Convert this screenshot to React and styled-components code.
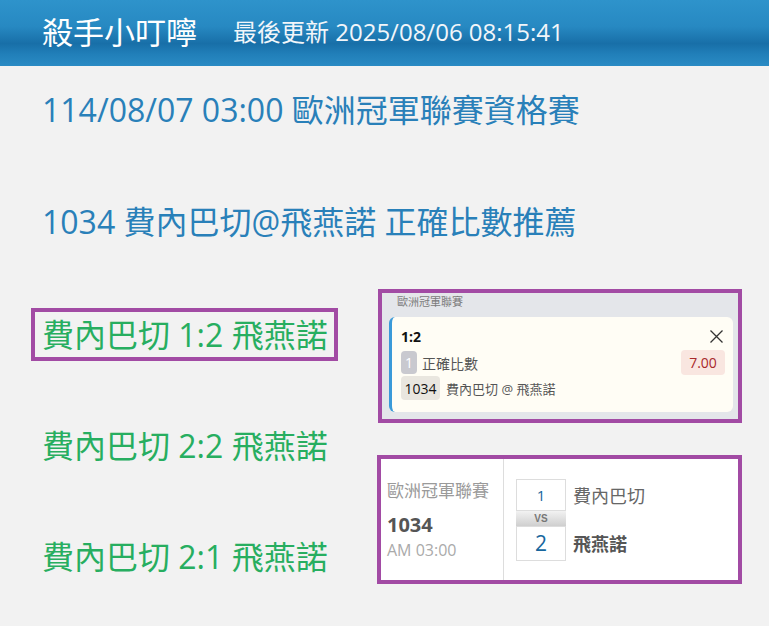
import React from 'react'
import styled, { createGlobalStyle } from 'styled-components'

const GlobalStyle = createGlobalStyle`
  body {
    margin: 0;
    background: #f2f2f2;
    font-family: 'Open Sans', 'Noto Sans CJK TC', sans-serif;
  }
  * {
    box-sizing: border-box;
  }
`

const Header = styled.header`
  height: 66px;
  display: flex;
  align-items: center;
  gap: 36px;
  padding: 0 0 2px 42px;
  background: linear-gradient(to bottom, #2e93cb 0%, #2789c2 40%, #186fa8 66%, #217fb9 82%, #2a8bc4 100%);
  color: #fff;
`

const Title = styled.div`
  font-size: 31px;
  line-height: 40px;
`

const Updated = styled.div`
  font-size: 24px;
  line-height: 34px;
  color: #f2f6fa;
`

const Content = styled.main`
  padding-top: 22px;
`

const InfoLine = styled.div`
  padding-left: 42px;
  font-size: 32px;
  line-height: 44px;
  color: #2980b9;
  margin-bottom: ${p => p.$mb}px;
  white-space: nowrap;
`

const Split = styled.div`
  display: flex;
`

const Picks = styled.div`
  width: 376px;
  flex-shrink: 0;
  padding: 19px 0 0 31px;
`

const Pick = styled.div`
  width: fit-content;
  border: 4px solid ${p => (p.$boxed ? '#a24ba4' : 'transparent')};
  padding: 0 6px 0 7px;
  font-size: 32px;
  line-height: 45px;
  color: #27ae60;
  margin-bottom: 58px;
  white-space: nowrap;
`

const Cards = styled.div`
  width: 367px;
`

const SlipCard = styled.div`
  margin-left: 2px;
  width: 364px;
  height: 134px;
  border: 4px solid #a24ba4;
  background: #e4e6ea;
  padding: 0 5px 7px 7px;
`

const SlipLeague = styled.div`
  font-size: 11px;
  line-height: 18px;
  color: #7b7b7b;
  padding-left: 8px;
  margin-bottom: 6px;
`

const Slip = styled.div`
  height: 95px;
  background: #fffdf5;
  border-left: 3px solid #3a9ad9;
  border-radius: 6px;
  padding: 9px 8px 0 9px;
`

const SlipRow = styled.div`
  display: flex;
  align-items: center;
  justify-content: ${p => (p.$spread ? 'space-between' : 'flex-start')};
  height: ${p => p.$h}px;
  margin-top: ${p => p.$mt || 0}px;
`

const Score = styled.div`
  font-size: 14px;
  font-weight: 700;
  color: #111;
`

const CloseButton = styled.div`
  display: flex;
  margin-right: 2px;
`

const Tag = styled.span`
  display: inline-flex;
  align-items: center;
  justify-content: center;
  height: ${p => p.$h}px;
  min-width: ${p => p.$w}px;
  border-radius: 4px;
  font-size: 14px;
  background: ${p => p.$bg};
  color: ${p => p.$fg};
`

const Market = styled.span`
  margin-left: 5px;
  font-size: 14px;
  color: #555;
`

const Odds = styled.span`
  margin-left: auto;
  display: inline-flex;
  align-items: center;
  justify-content: center;
  width: 44px;
  height: 25px;
  border-radius: 4px;
  background: #f9e6e0;
  color: #a8282a;
  font-size: 14px;
`

const Teams = styled.span`
  margin-left: 6px;
  font-size: 13px;
  color: #555;
`

const MatchCard = styled.div`
  margin: 32px 0 0 1px;
  width: 365px;
  height: 129px;
  border: 4px solid #a24ba4;
  background: #fff;
  display: flex;
`

const MatchInfo = styled.div`
  width: 123px;
  padding-left: 6px;
  border-right: 1px solid #ddd;
  display: flex;
  flex-direction: column;
  justify-content: center;
`

const League = styled.div`
  font-size: 17px;
  line-height: 24px;
  color: #9a9a9a;
`

const GameNo = styled.div`
  margin-top: 7px;
  font-size: 20px;
  font-weight: 700;
  line-height: 30px;
  color: #555;
`

const KickOff = styled.div`
  font-size: 16px;
  line-height: 20px;
  color: #aaa;
`

const Board = styled.div`
  padding-left: 12px;
  display: grid;
  grid-template-columns: 50px auto;
  grid-template-rows: 32px 15px 35px;
  column-gap: 7px;
  align-content: center;
`

const ScoreBox = styled.div`
  display: flex;
  align-items: center;
  justify-content: center;
  border: 1px solid #ddd;
  color: #17669d;
  font-size: ${p => p.$size}px;
`

const Versus = styled.div`
  display: flex;
  align-items: center;
  justify-content: center;
  background: linear-gradient(to bottom, #f2f2f2, #cfcfcf);
  font-family: 'Liberation Sans', sans-serif;
  font-size: 10px;
  font-weight: 700;
  color: #777;
`

const TeamName = styled.div`
  display: flex;
  align-items: center;
  font-size: 18px;
  font-weight: ${p => (p.$bold ? 700 : 400)};
  color: ${p => (p.$bold ? '#555' : '#666')};
`

const CloseIcon = () => (
  <svg width="13" height="13" viewBox="0 0 13 13">
    <path d="M0.5 0.5 L12.5 12.5 M12.5 0.5 L0.5 12.5" stroke="#333" strokeWidth="1.3" fill="none" />
  </svg>
)

const picks = [
  { text: '費內巴切 1:2 飛燕諾', boxed: true },
  { text: '費內巴切 2:2 飛燕諾' },
  { text: '費內巴切 2:1 飛燕諾' },
]

export default function App() {
  return (
    <>
      <GlobalStyle />
      <Header>
        <Title>殺手小叮嚀</Title>
        <Updated>最後更新 2025/08/06 08:15:41</Updated>
      </Header>
      <Content>
        <InfoLine $mb={68}>114/08/07 03:00 歐洲冠軍聯賽資格賽</InfoLine>
        <InfoLine $mb={45}>1034 費內巴切@飛燕諾 正確比數推薦</InfoLine>
        <Split>
          <Picks>
            {picks.map(p => (
              <Pick key={p.text} $boxed={p.boxed}>{p.text}</Pick>
            ))}
          </Picks>
          <Cards>
            <SlipCard>
              <SlipLeague>歐洲冠軍聯賽</SlipLeague>
              <Slip>
                <SlipRow $h={20} $spread>
                  <Score>1:2</Score>
                  <CloseButton><CloseIcon /></CloseButton>
                </SlipRow>
                <SlipRow $h={25} $mt={4}>
                  <Tag $h={23} $w={16} $bg="#c9c9cf" $fg="#fff">1</Tag>
                  <Market>正確比數</Market>
                  <Odds>7.00</Odds>
                </SlipRow>
                <SlipRow $h={24} $mt={1}>
                  <Tag $h={24} $w={39} $bg="#e9e6df" $fg="#111">1034</Tag>
                  <Teams>費內巴切 @ 飛燕諾</Teams>
                </SlipRow>
              </Slip>
            </SlipCard>
            <MatchCard>
              <MatchInfo>
                <League>歐洲冠軍聯賽</League>
                <GameNo>1034</GameNo>
                <KickOff>AM 03:00</KickOff>
              </MatchInfo>
              <Board>
                <ScoreBox $size={15}>1</ScoreBox>
                <TeamName>費內巴切</TeamName>
                <Versus>VS</Versus>
                <div />
                <ScoreBox $size={21}>2</ScoreBox>
                <TeamName $bold>飛燕諾</TeamName>
              </Board>
            </MatchCard>
          </Cards>
        </Split>
      </Content>
    </>
  )
}
